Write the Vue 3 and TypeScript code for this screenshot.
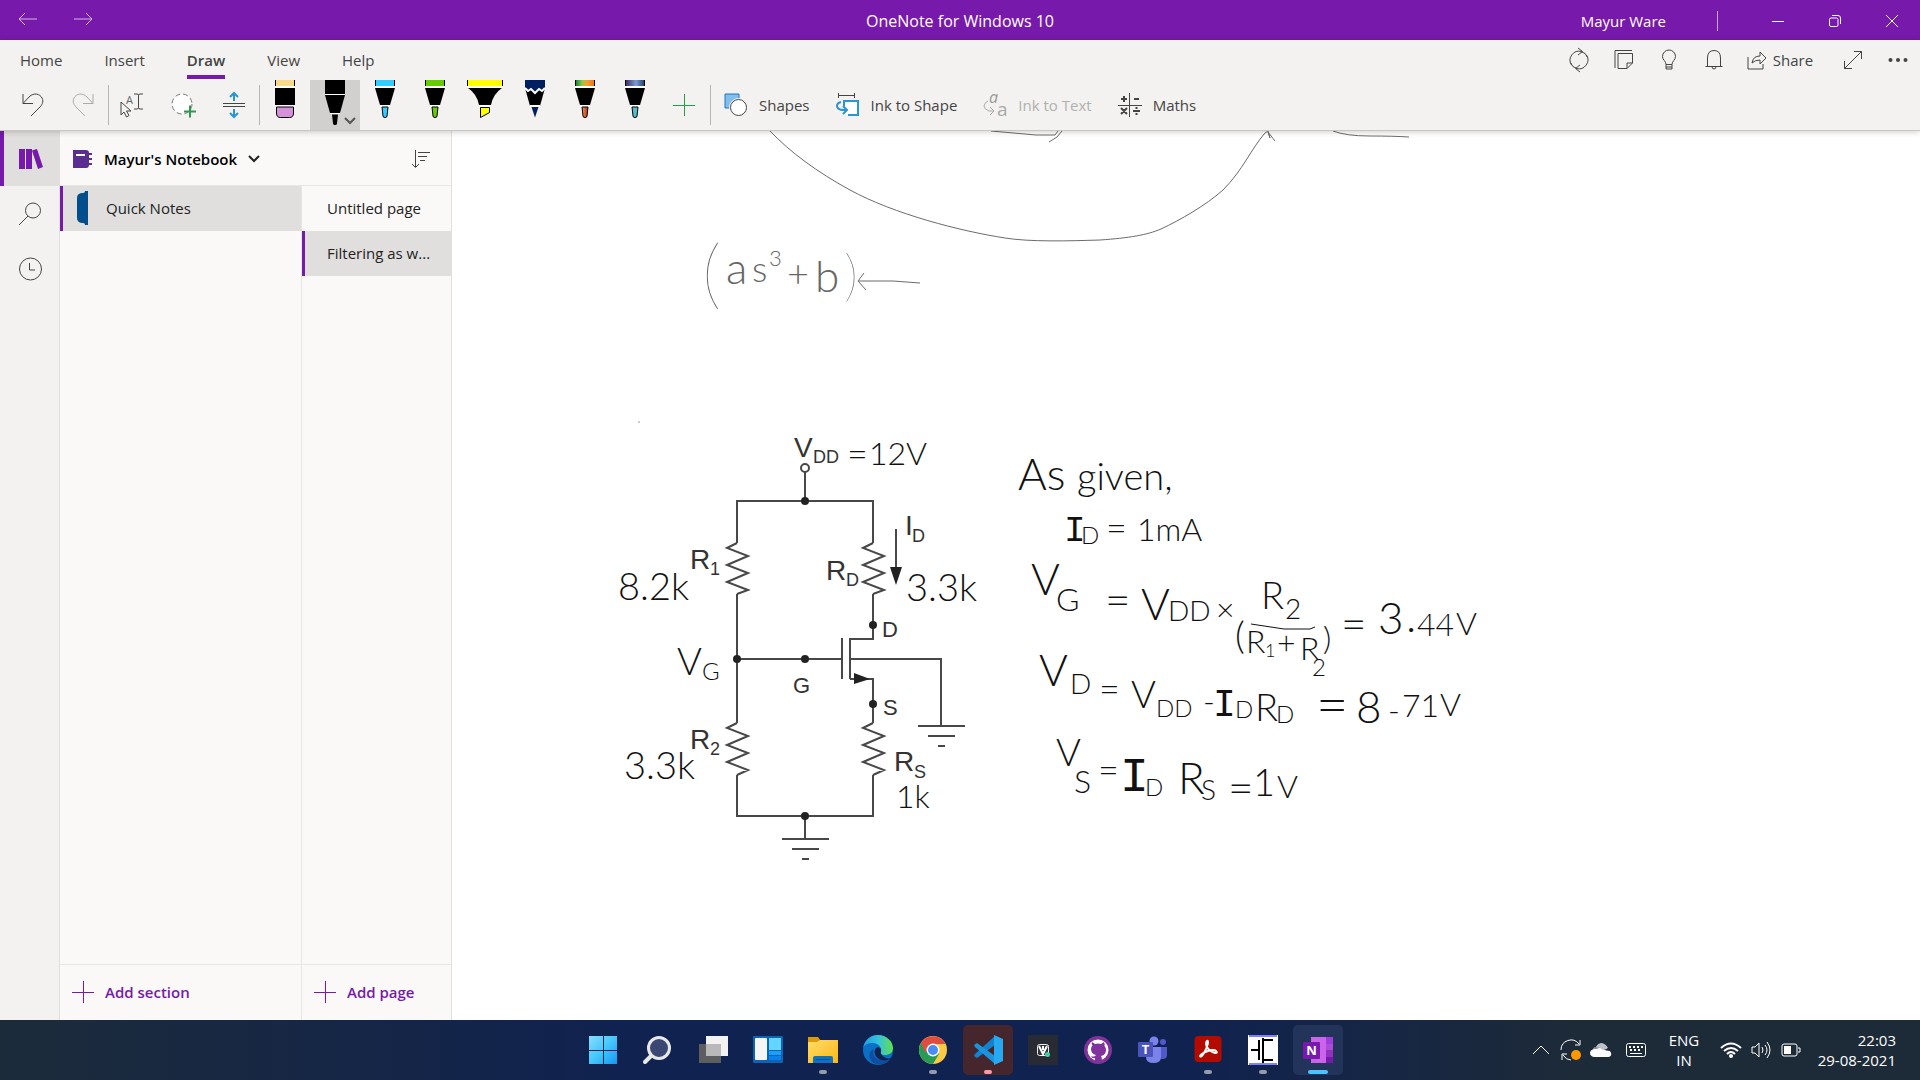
<script setup lang="ts">
interface Run { t: string; x: number; y: number; s: number; c?: string }
interface Pen { name: string; kind: string; cap: string; tip: string }

const tabs = ['Home', 'Insert', 'Draw', 'View', 'Help']

const pens: Pen[] = [
  { name: 'Eraser', kind: 'eraser', cap: '#f8d98b', tip: '#d493d9' },
  { name: 'Black pen', kind: 'active', cap: '#000', tip: '#000' },
  { name: 'Blue pen', kind: 'pen', cap: '#33ccff', tip: '#33ccff' },
  { name: 'Green pen', kind: 'pen', cap: '#66cc00', tip: '#66cc00' },
  { name: 'Yellow highlighter', kind: 'marker', cap: '#ffff00', tip: '#ffff00' },
  { name: 'Navy pencil', kind: 'pencil', cap: '#001f60', tip: '#001f60' },
  { name: 'Rainbow pen', kind: 'pen', cap: 'url(#rainbow)', tip: 'url(#lava)' },
  { name: 'Galaxy pen', kind: 'pen', cap: 'url(#galaxy)', tip: '#55bccb' },
]

const labels: Run[][] = [
  [{ t: 'V', x: 794, y: 457, s: 28 }, { t: 'DD', x: 813, y: 463, s: 18 }],
  [{ t: 'I', x: 905, y: 535, s: 28 }, { t: 'D', x: 912, y: 542, s: 18 }],
  [{ t: 'R', x: 690, y: 569, s: 28 }, { t: '1', x: 710, y: 575, s: 18 }],
  [{ t: 'R', x: 826, y: 580, s: 28 }, { t: 'D', x: 846, y: 586, s: 18 }],
  [{ t: 'D', x: 882, y: 637, s: 22 }],
  [{ t: 'G', x: 793, y: 693, s: 22 }],
  [{ t: 'S', x: 883, y: 715, s: 22 }],
  [{ t: 'R', x: 690, y: 749, s: 28 }, { t: '2', x: 710, y: 755, s: 18 }],
  [{ t: 'R', x: 894, y: 771, s: 28 }, { t: 'S', x: 914, y: 778, s: 18 }],
]

const notes: Run[][] = [
  [{ t: '=', x: 847, y: 467, s: 36 }, { t: '12V', x: 869, y: 465, s: 32 }],
  [{ t: '8.2k', x: 618, y: 600, s: 38 }],
  [{ t: '3.3k', x: 906, y: 601, s: 38 }],
  [{ t: 'V', x: 677, y: 675, s: 38 }, { t: 'G', x: 702, y: 680, s: 24 }],
  [{ t: '3.3k', x: 624, y: 779, s: 38 }],
  [{ t: '1k', x: 896, y: 808, s: 32 }],
  [{ t: 'As', x: 1018, y: 490, s: 44 }],
  [{ t: 'given,', x: 1077, y: 490, s: 38 }],
  [{ t: 'I', x: 1064, y: 541, s: 36, c: 'serifed' }, { t: 'D', x: 1081, y: 544, s: 24 }, { t: '=', x: 1106, y: 541, s: 36 }, { t: '1mA', x: 1137, y: 541, s: 32 }],
  [{ t: 'V', x: 1031, y: 595, s: 44 }, { t: 'G', x: 1056, y: 611, s: 32 }, { t: '=', x: 1105, y: 616, s: 44 }, { t: 'V', x: 1141, y: 620, s: 44 }, { t: 'DD', x: 1168, y: 621, s: 28 }, { t: '×', x: 1216, y: 621, s: 32 }, { t: 'R', x: 1261, y: 609, s: 38 }, { t: '2', x: 1285, y: 619, s: 28 }],
  [{ t: '(', x: 1235, y: 649, s: 38 }, { t: 'R', x: 1246, y: 653, s: 32 }, { t: '1', x: 1265, y: 657, s: 18 }, { t: '+', x: 1277, y: 654, s: 32 }, { t: 'R', x: 1300, y: 660, s: 32 }, { t: '2', x: 1312, y: 676, s: 24 }, { t: ')', x: 1323, y: 650, s: 32 }],
  [{ t: '=', x: 1341, y: 640, s: 44 }, { t: '3', x: 1378, y: 634, s: 44 }, { t: '.', x: 1406, y: 632, s: 44 }, { t: '44', x: 1417, y: 636, s: 32 }, { t: 'V', x: 1456, y: 635, s: 32 }],
  [{ t: 'V', x: 1039, y: 686, s: 44 }, { t: 'D', x: 1070, y: 694, s: 28 }, { t: '=', x: 1099, y: 702, s: 36 }, { t: 'V', x: 1131, y: 708, s: 38 }, { t: 'DD', x: 1156, y: 717, s: 24 }, { t: '-', x: 1203, y: 713, s: 32 }, { t: 'I', x: 1213, y: 716, s: 38, c: 'serifed' }, { t: 'D', x: 1235, y: 718, s: 24 }, { t: 'R', x: 1255, y: 721, s: 38 }, { t: 'D', x: 1276, y: 723, s: 24 }, { t: '8', x: 1356, y: 723, s: 44 }, { t: '-', x: 1388, y: 722, s: 32 }, { t: '71', x: 1402, y: 717, s: 32 }, { t: 'V', x: 1440, y: 716, s: 32 }],
  [{ t: '=', x: 1316, y: 724, s: 56 }],
  [{ t: 'V', x: 1056, y: 766, s: 38 }, { t: 'S', x: 1074, y: 793, s: 32 }, { t: '=', x: 1098, y: 783, s: 36 }, { t: 'I', x: 1120, y: 791, s: 48, c: 'serifed' }, { t: 'D', x: 1145, y: 796, s: 24 }, { t: 'R', x: 1178, y: 794, s: 44 }, { t: 'S', x: 1201, y: 800, s: 28 }, { t: '=', x: 1228, y: 804, s: 44 }, { t: '1', x: 1253, y: 796, s: 38 }, { t: 'V', x: 1277, y: 798, s: 32 }],
]

const formula: Run[] = [
  { t: '(', x: 702, y: 300, s: 76, c: 'hairline' },
  { t: 'a', x: 726, y: 284, s: 44 },
  { t: 's', x: 752, y: 282, s: 36 },
  { t: '3', x: 769, y: 266, s: 22 },
  { t: '+', x: 787, y: 287, s: 38 },
  { t: 'b', x: 815, y: 292, s: 44 },
  { t: ')', x: 844, y: 295, s: 56, c: 'hairline' },
]

const nodes = [[805, 501], [873, 625], [737, 659], [805, 659], [873, 704], [805, 816]]
const apps = ['Start', 'Search', 'Task view', 'Widgets', 'File Explorer', 'Edge', 'Chrome', 'Visual Studio Code', 'Voice', 'GitHub Desktop', 'Teams', 'Acrobat', 'LTspice', 'OneNote']
const running = ['File Explorer', 'Chrome', 'Visual Studio Code', 'Acrobat', 'LTspice', 'OneNote']
</script>

<template>
  <div class="window">
    <header class="titlebar">
      <nav class="history">
        <button aria-label="Back"><svg width="20" height="14" viewBox="0 0 20 14"><path d="M1 7h18M7 1L1 7l6 6" /></svg></button>
        <button aria-label="Forward"><svg width="20" height="14" viewBox="0 0 20 14"><path d="M1 7h18M13 1l6 6-6 6" /></svg></button>
      </nav>
      <h1>OneNote for Windows 10</h1>
      <div class="window-side">
        <span class="user">Mayur Ware</span>
        <span class="bar"></span>
        <button aria-label="Minimise"><svg width="14" height="14"><path d="M1 7.500h12" /></svg></button>
        <button aria-label="Restore"><svg width="14" height="14"><rect x="1.500" y="4" width="8.500" height="8.500" rx="1.500" /><path d="M4 1.500h6q2.500 0 2.500 2.500v6" /></svg></button>
        <button aria-label="Close"><svg width="14" height="14"><path d="M1 1l12 12M13 1L1 13" /></svg></button>
      </div>
    </header>

    <section class="ribbon">
      <div class="menu">
        <nav class="tabs">
          <button v-for="tab in tabs" :key="tab" :class="{ current: tab === 'Draw' }">{{ tab }}</button>
        </nav>
        <div class="actions">
          <button aria-label="Sync"><svg width="24" height="24" viewBox="0 0 24 24"><path d="M4.500 17A9 9 0 0 1 14.500 3.500M19.500 7A9 9 0 0 1 9.500 20.500M11 0l4.500 3.500L11 7M13 24l-4.500-3.500L13 17" /><path d="M14 3.500q5 1 6.500 6M10 20.500q-5-1-6.500-6" /></svg></button>
          <button aria-label="Feed"><svg width="22" height="22" viewBox="0 0 22 22"><path d="M5 4.500h14.500V14L14 19.500H5zM14 19.500V14h5.500M2 19V1.500h17" /></svg></button>
          <button aria-label="Tips"><svg width="20" height="22" viewBox="0 0 20 22"><path d="M7 15.500C7 12 3.500 11 3.500 7.500a6.500 6.500 0 0 1 13 0C16.500 11 13 12 13 15.500zM7 15.500V20h6v-4.500M7 18h6" /></svg></button>
          <button aria-label="Notifications"><svg width="20" height="22" viewBox="0 0 20 22"><path d="M1.500 17.500h17M3.500 17.500V9q0-7.500 6.500-7.500T16.500 9v8.500M8 17.500q0 2.500 2 2.500t2-2.500" /></svg></button>
          <button class="share"><svg width="20" height="22" viewBox="0 0 20 22"><path d="M1 8v12h15v-5M5 14q1-7 8-7V3l6 6-6 6v-4q-5 0-8 3z" /></svg>Share</button>
          <button aria-label="Full screen"><svg width="20" height="20" viewBox="0 0 20 20"><path d="M1.500 18.500l17-17M11 1.500h7.500V9M1.500 11v7.500H9" /></svg></button>
          <button aria-label="More"><svg width="20" height="8" viewBox="0 0 20 8" class="solid"><circle cx="2.500" cy="4" r="2" /><circle cx="10" cy="4" r="2" /><circle cx="17.500" cy="4" r="2" /></svg></button>
        </div>
      </div>

      <div class="tools">
        <button class="tool" aria-label="Undo"><svg width="24" height="26" viewBox="0 0 24 26"><path d="M2 2v9.500h10M2 11.500L8 5c5-5 11-3 13 1 2 4 0 7-3 10l-8 8" /></svg></button>
        <button class="tool faded" aria-label="Redo"><svg width="24" height="26" viewBox="0 0 24 26"><path d="M22 2v9.500H12M22 11.500L16 5C11 0 5 2 3 6c-2 4 0 7 3 10l8 8" /></svg></button>
        <span class="rule"></span>
        <button class="tool" aria-label="Select objects or type text">
          <svg width="28" height="26" viewBox="2 0 28 26"><path d="M3 10v13l3-3 2.500 5 2.500-1.500L8.500 19H13zM16 2h3q1.500 0 1.500 1.500Q20.500 2 22 2h3M20.500 3.500v12M16 17h3q1.500 0 1.500-1.500Q20.500 17 22 17h3" /><text x="8" y="12" class="mini">A</text></svg>
        </button>
        <button class="tool" aria-label="Lasso select">
          <svg width="26" height="26" viewBox="0 0 26 26"><circle cx="11" cy="12" r="10" fill="#fff" stroke="#777" stroke-dasharray="5 3" /><path d="M13 19.500h12M19 13.500v12" stroke="#2a9b4a" stroke-width="2" /></svg>
        </button>
        <button class="tool" aria-label="Insert space">
          <svg width="24" height="26" viewBox="0 0 24 26"><path d="M1 11.500h22M1 14.500h22" /><path d="M12 9V2M8 5l4-4 4 4M12 17v7M8 21l4 4 4-4" stroke="#2a94d8" stroke-width="2" /></svg>
        </button>
        <span class="rule"></span>
        <button v-for="pen in pens" :key="pen.name" class="tool pen" :class="{ active: pen.kind === 'active' }" :aria-label="pen.name">
          <svg width="50" height="50" viewBox="0 0 50 50">
            <defs>
              <linearGradient id="rainbow"><stop offset="0" stop-color="#177a39" /><stop offset=".35" stop-color="#8ccb4c" /><stop offset=".6" stop-color="#f5a02c" /><stop offset="1" stop-color="#e87322" /></linearGradient>
              <linearGradient id="lava"><stop offset="0" stop-color="#f29b45" /><stop offset="1" stop-color="#b52c21" /></linearGradient>
              <linearGradient id="galaxy"><stop offset="0" stop-color="#3d2860" /><stop offset=".55" stop-color="#7b9fd3" /><stop offset="1" stop-color="#253b6c" /></linearGradient>
            </defs>
            <template v-if="pen.kind === 'eraser'">
              <path d="M15 0h20v38H15z" fill="#fff" /><path d="M15.500 0h19v6h-19z" :fill="pen.cap" /><path d="M15.500 0v6M34.500 0v6" stroke="#000" /><path d="M15 8h20v17H15z" fill="#000" /><path d="M13 25h24v14H13z" fill="#f3f2f1" /><path d="M15 25.500h20v1.500H15z" fill="#fff" /><path d="M16.500 27h17v6q0 4.500-4 4.500h-9q-4 0-4-4.500z" :fill="pen.tip" stroke="#000" />
            </template>
            <template v-else-if="pen.kind === 'active'">
              <path d="M15 0h20v15l-5 18H20l-5-18z" fill="#000" /><path d="M15 14.500h20" stroke="#fff" /><path d="M20 33.500h10" stroke="#fff" /><path d="M22 34.500h6l-1 9q0 1.500-2 1.500t-2-1.500z" fill="#000" /><path d="M35 38l5 5 5-5" stroke="#555" stroke-width="2" fill="none" />
            </template>
            <template v-else-if="pen.kind === 'marker'">
              <path d="M7.500 0h35v6h-35z" :fill="pen.cap" /><path d="M7.500 0v6M42.500 0v6" stroke="#000" /><path d="M7 7h36M19 26h12" stroke="#fff" stroke-width="2" /><path d="M8 8h34Q33 14 31 25H19Q17 14 8 8z" fill="#000" /><path d="M20.500 27.500h9v5l-9 5z" :fill="pen.tip" stroke="#000" />
            </template>
            <template v-else-if="pen.kind === 'pencil'">
              <path d="M15 0h20v8l-5 18H20L15 8z" fill="#000" /><path d="M15 0h20v8l-3 3-3-2-4 4-4-4-3 2-3-3z" :fill="pen.cap" /><path d="M15 8l3 3 3-2 4 4 4-4 3 2 3-3M20 26h10" stroke="#fff" stroke-width="2" fill="none" /><path d="M21.500 27h7L25 37.500z" :fill="pen.tip" />
            </template>
            <template v-else>
              <path d="M15.500 0h19v6h-19z" :fill="pen.cap" /><path d="M15.500 0v6M34.500 0v6" stroke="#000" /><path d="M15 7h20M20 26h10" stroke="#fff" stroke-width="2" /><path d="M15 8h20l-5 17H20z" fill="#000" /><path d="M22 27h6l-1 9q0 1.500-2 1.500t-2-1.500z" :fill="pen.tip" stroke="#000" />
            </template>
          </svg>
        </button>
        <button class="tool" aria-label="Add pen"><svg width="24" height="24" viewBox="0 0 24 24"><path d="M0 12.500h22M11.500 1v22" stroke="#2a9b4a" /></svg></button>
        <span class="rule"></span>
        <button class="wide"><svg width="24" height="26" viewBox="0 0 24 26"><path d="M1 2h14v14H1z" fill="#83bdec" stroke="#1b78c2" /><circle cx="14.500" cy="15.500" r="9" fill="#f3f2f1" stroke="#f3f2f1" /><circle cx="14.500" cy="15.500" r="8" fill="#fff" /></svg>Shapes</button>
        <button class="wide"><svg width="24" height="26" viewBox="0 0 24 26"><path d="M2 3.500h17M2.500 1v5M18.500 1v5" /><path d="M8 9h14v14H12M8 9v5" stroke="#2a94d8" fill="#fff" stroke-width="2" /><path d="M8 9v14h14V9z" fill="#fff" stroke="none" /><path d="M8 14V9h14v14H12M5 10q-4 1-4 4t5 4h5M7 14l4 4-4 4" stroke="#2a94d8" stroke-width="2" /></svg>Ink to Shape</button>
        <button class="wide faded" disabled><svg width="24" height="26" viewBox="0 0 24 26"><text x="6" y="11" class="small-a">a</text><text x="14" y="24" class="big-a">a</text><path d="M5 9q-4 2-4 5t5 5h5M7 15l4 4-4 4" /></svg>Ink to Text</button>
        <button class="wide"><svg width="24" height="26" viewBox="0 0 24 26"><path d="M0 13.500h24M11.500 1v24" /><path d="M3 7h6M6 4v6M16 7h5M3 16l6 6M9 16l-6 6M15 19h7M18.500 15v2M18.500 21v2" stroke-width="2" /></svg>Maths</button>
      </div>
    </section>

    <div class="workspace">
      <nav class="rail">
        <button class="chosen" aria-label="Notebooks"><svg width="24" height="22" viewBox="0 0 24 22" fill="#7719aa"><path d="M0 1h6v20H0zM7 1h6v20H7zM13 2.500L18 1l6 18-5 2z" /></svg></button>
        <button aria-label="Search"><svg width="24" height="24" viewBox="0 0 24 24"><circle cx="15" cy="8.500" r="7.500" /><path d="M10 14L1 23" /></svg></button>
        <button aria-label="Recent"><svg width="24" height="24" viewBox="0 0 24 24"><circle cx="12.500" cy="12" r="11" /><path d="M11.500 6v7H17" /></svg></button>
      </nav>
      <aside class="panel">
        <div class="notebook">
          <button class="book">
            <svg width="20" height="20" viewBox="0 0 20 20"><path d="M0 1h13q3 0 3 3v12q0 3-3 3H0z" fill="#5c2d91" /><path d="M3 6h9" stroke="#fff" stroke-width="2" /><path d="M16 5h3M16 10h3M16 15h3" stroke="#5c2d91" stroke-width="2" /></svg>
            <span>Mayur's Notebook</span>
            <svg width="12" height="8" viewBox="0 0 12 8"><path d="M1 1l5 5 5-5" stroke="#222" stroke-width="2" /></svg>
          </button>
          <button aria-label="Sort pages"><svg width="20" height="20" viewBox="0 0 20 20"><path d="M4.500 1v17M1 15l3.500 3.500L8 15M7 3.500h12M7 7.500h9M9 11.500h5" /></svg></button>
        </div>
        <div class="lists">
          <div class="sections">
            <button class="item chosen"><svg width="11" height="34" viewBox="0 0 11 34"><path d="M11 0v34H8q0-2-2-2Q0 32 0 27V7q0-5 6-5 2 0 2-2z" fill="#004e8c" /></svg>Quick Notes</button>
            <button class="add"><svg width="22" height="22"><path d="M0 11.500h22M11.500 0v22" stroke="#7719aa" /></svg>Add section</button>
          </div>
          <div class="pages">
            <button class="item">Untitled page</button>
            <button class="item chosen">Filtering as w...</button>
            <button class="add"><svg width="22" height="22"><path d="M0 11.500h22M11.500 0v22" stroke="#7719aa" /></svg>Add page</button>
          </div>
        </div>
      </aside>

      <main class="canvas">
        <svg class="ink" width="1468" height="889" viewBox="452 131 1468 889">
          <g class="old">
            <path d="M770 131C790 152 817 172 850 190C894 214 960 231 1005 238C1030 242 1068 241 1100 240C1129 238 1147 235 1161 229C1180 220 1205 206 1223 190C1243 170 1251 149 1265 133L1268 131L1270 138L1268 132L1275 141" />
            <path d="M991 131L1036 135H1055L1058 131M1062 131L1057 137L1049 142M1333 131Q1346 136 1370 136T1409 137" />
            <path d="M864 273L858 281L866 290M859 281H893L920 283" />
          </g>
          <text class="hand old-text"><tspan v-for="(r, i) in formula" :key="i" :class="r.c" :x="r.x" :y="r.y" :font-size="r.s">{{ r.t }}</tspan></text>
          <g class="circuit">
            <circle cx="805" cy="468" r="4" />
            <path d="M805 472V501M737 543V501H873V543M737 594V723M737 775V816H873V775M873 594V639H850M850 638V679M842 638V679M737 659H842M850 659H941V726M850 679H873V723M805 816V839M782 839H829M792 849H819M802 859H809M918 726H965M928 736H955M938 746H945M896 529V570" />
            <path d="M737 543L727 548L748 556L727 565L748 573L727 582L748 590L737 594M873 543L863 548L884 556L863 565L884 573L863 582L884 590L873 594M737 723L727 728L748 736L727 745L748 753L727 762L748 770L737 775M873 723L863 728L884 736L863 745L884 753L863 762L884 770L873 775" />
            <path class="fill" d="M890 567h12l-6 18zM854 673l16 6-16 5z" />
            <circle v-for="(n, i) in nodes" :key="i" class="fill" :cx="n[0]" :cy="n[1]" r="4" />
          </g>
          <text v-for="(line, i) in labels" :key="'l' + i" class="label"><tspan v-for="(r, j) in line" :key="j" :x="r.x" :y="r.y" :font-size="r.s">{{ r.t }}</tspan></text>
          <text v-for="(line, i) in notes" :key="'n' + i" class="hand"><tspan v-for="(r, j) in line" :key="j" :class="r.c" :x="r.x" :y="r.y" :font-size="r.s">{{ r.t }}</tspan></text>
          <path class="stroke" d="M1251 624L1284 629H1310L1315 627" />
          <circle cx="639" cy="422" r="1" fill="#bbb" />
        </svg>
      </main>
    </div>

    <footer class="taskbar">
      <div class="apps">
        <button v-for="app in apps" :key="app" class="app" :class="{ running: running.includes(app), front: app === 'OneNote', alert: app === 'Visual Studio Code' }" :aria-label="app">
          <svg width="30" height="30" viewBox="0 0 30 30">
            <defs>
              <linearGradient id="win" x2="1" y2="1"><stop offset="0" stop-color="#86defd" /><stop offset=".5" stop-color="#46c6fb" /><stop offset="1" stop-color="#1496f5" /></linearGradient>
              <linearGradient id="folder" x2="1" y2="1"><stop offset="0" stop-color="#ffdc6b" /><stop offset="1" stop-color="#fbb812" /></linearGradient>
              <linearGradient id="edge" x2="1"><stop offset="0" stop-color="#1e9de0" /><stop offset=".5" stop-color="#35c1e0" /><stop offset="1" stop-color="#5fe04a" /></linearGradient>
            </defs>
            <g v-if="app === 'Start'" fill="url(#win)"><path d="M1 1h14v14H1zM16 1h13v14H16zM1 16h14v13H1zM16 16h13v13H16z" /></g>
            <g v-else-if="app === 'Search'" fill="#3b4873" stroke="#e8e8e8"><path d="M10 19l-8 8" stroke-width="4" stroke-linecap="round" /><circle cx="16" cy="13" r="10.500" stroke-width="3" /></g>
            <g v-else-if="app === 'Task view'"><path d="M8 1h22v20H8z" fill="#f2f2f2" /><path d="M1 9h22v19H1z" fill="#5e5e5e" /><path d="M8 9h15v12H8z" fill="#b9b9b9" /></g>
            <g v-else-if="app === 'Widgets'"><rect y="1" width="30" height="27" rx="1" fill="#0d64b5" /><rect x="2" y="3" width="12" height="22" rx="1" fill="#f5f5f5" /><path d="M16 3h12v12H16z" fill="#63d5ff" /><path d="M16 16h12v4H16z" fill="#19a0fa" /><path d="M16 21h12v4H16z" fill="#0b80ea" /></g>
            <g v-else-if="app === 'File Explorer'"><path d="M0 2h10l3 4v6H0z" fill="#dc9a08" /><path d="M0 7h9l3-2h18v23H0z" fill="url(#folder)" /><path d="M5 28v-5q0-2 2-2h16q2 0 2 2v5z" fill="#0f72c0" /><path d="M8 24.500h14" stroke="#0a4f90" /></g>
            <g v-else-if="app === 'Edge'"><circle cx="15" cy="15" r="15" fill="#0b6fc6" /><path d="M0 13C2 4 8 0 15 0c8 0 15 6 15 13 0 5-4 7-8 7-3 0-5-1-4-3 1-5-3-9-8-9-5 0-9 2-10 5z" fill="url(#edge)" /><path d="M11 14c-3 7 3 14 16 10-4 7-16 8-20 0-2-5 1-9 4-10z" fill="#0c4fa0" /><path d="M13 13c-3 4-1 10 5 12 4 1 8 0 10-2-3 1-6 0-8-2-2-2-3-3-2-5 1-3-3-5-5-3z" fill="#10224f" /></g>
            <g v-else-if="app === 'Chrome'"><circle cx="15" cy="15" r="14" fill="#fbc943" /><path d="M15 15L2.900 8A14 14 0 0 0 15 29l6-10z" fill="#259b55" /><path d="M15 15l-8 2L2.900 8A14 14 0 0 1 27.500 9H15z" fill="#de4d40" /><circle cx="15" cy="15" r="6.500" fill="#fff" /><circle cx="15" cy="15" r="5" fill="#4b8bf5" /></g>
            <g v-else-if="app === 'Visual Studio Code'"><path d="M2 19L22 1v9L4 23l-3-2z" fill="#1183cf" /><path d="M1 10l3-2 18 13v8L2 12z" fill="#1994dd" /><path d="M21 0l9 4v22l-9 4z" fill="#27a9f1" /></g>
            <g v-else-if="app === 'Voice'"><path d="M0 0h30v30H0z" fill="#282b34" /><rect x="9.500" y="9.500" width="11" height="11" rx="2" fill="#30343c" stroke="#eee" /><path d="M11 11l4 8 4-8M15 11v4" stroke="#fff" stroke-width="2" fill="none" /><circle cx="19.500" cy="19.500" r="2.500" fill="#3bd3a4" /></g>
            <g v-else-if="app === 'GitHub Desktop'"><circle cx="15" cy="15" r="14" fill="#81339c" /><circle cx="15" cy="15" r="10.500" fill="#fff" /><path d="M9 7l3 2q3-1 6 0l3-2q1 2 .5 4 1.500 1.500 1.500 4 0 5-5 6 1 1 1 5h-7v-3q-3 1-4-2 2 1 4 0l1-1q-5-1-5-6 0-2.500 1.500-3.500Q8 9 9 7z" fill="#81339c" /></g>
            <g v-else-if="app === 'Teams'"><circle cx="16" cy="6" r="4.500" fill="#7b83eb" /><circle cx="25" cy="7" r="3" fill="#5059c9" /><path d="M20 12h9v8q0 4-4 4h-5z" fill="#5059c9" /><path d="M8 12h15v10q0 6-7.500 6T8 22z" fill="#7b83eb" /><rect y="7" width="15" height="15" rx="1" fill="#4b53bc" /><text x="7.500" y="19" class="logo">T</text></g>
            <g v-else-if="app === 'Acrobat'"><rect x="1.500" y="1" width="27" height="26" rx="4" fill="#b30b00" /><path d="M14 6q-2 2 0 6t8 6q3 0 1-2t-8 0-8 5q1 2 4-3t4-10q0-3-1-2z" stroke="#fff" stroke-width="2" fill="none" /></g>
            <g v-else-if="app === 'LTspice'"><path d="M0 0h30v30H0z" fill="#fff" /><path d="M1 1h28M1 29h28" stroke="#00f" /><path d="M3 15h8M11 5v20M15 3v25M16 5h9M16 25h9" stroke="#000" stroke-width="2" /></g>
            <g v-else><path d="M8 2h15v26H8z" fill="#ca64ea" /><path d="M23 2h7v7h-7z" fill="#a03cdb" /><path d="M23 9h7v6h-7z" fill="#ae4bd5" /><path d="M23 15h7v7h-7z" fill="#9332bf" /><path d="M23 22h7v6h-7z" fill="#7719aa" /><rect y="7" width="17" height="17" rx="1" fill="#7719aa" /><text x="8.500" y="20" class="logo">N</text></g>
          </svg>
        </button>
      </div>
      <div class="tray">
        <button aria-label="Hidden icons"><svg width="18" height="10" viewBox="0 0 18 10"><path d="M1 9l8-8 8 8" /></svg></button>
        <button aria-label="Update"><svg width="22" height="22" viewBox="0 0 22 22"><path d="M1 11A10 10 0 0 1 19 5M20 1v5h-5M2 21v-6h5M3 16q3 5 8 5" /><circle cx="16" cy="16" r="5" fill="#ff9800" stroke="none" /></svg></button>
        <button aria-label="OneDrive"><svg width="22" height="14" viewBox="0 0 22 14" class="flat"><path d="M3 9Q2 4 6 4q3-5 8-2 3 2 3 4z" fill="#8c939b" /><path d="M4 14q-4-1-4-4t4-4h3q3-2 6 0t7 2q3 4-1 6z" fill="#fff" /><path d="M6 4q4 0 7 3l5-2q-2-4-6-5-4 0-6 4z" fill="#bcc1c6" /></svg></button>
        <button class="keys" aria-label="Touch keyboard"><svg width="20" height="14" viewBox="0 0 20 14"><rect x=".5" y=".5" width="19" height="13" rx="2" /><path d="M3 4h14M4 7h12" stroke-dasharray="2 2" stroke-width="2" /><path d="M4 10.500h12" /></svg></button>
        <button class="language">ENG<br>IN</button>
        <button aria-label="Network"><svg width="22" height="16" viewBox="0 0 22 16"><path d="M1 6q10-9 20 0M4 9q7-6 14 0M7 12q4-4 8 0" stroke-width="2" /><circle cx="11" cy="14" r="2" fill="#fff" stroke="none" /></svg></button>
        <button aria-label="Volume"><svg width="20" height="18" viewBox="0 0 20 18"><path d="M1 6h3l4-4v14l-4-4H1zM11 6q2 3 0 6M14 4q4 5 0 10M16 1q6 8 0 16" /></svg></button>
        <button aria-label="Battery"><svg width="20" height="14" viewBox="0 0 20 14"><rect x="1" y="1" width="15" height="12" rx="2" /><path d="M3 3h7v8H3z" fill="#fff" stroke="none" /><path d="M17 5h2v4h-2" /></svg></button>
        <button class="clock">22:03<br>29-08-2021</button>
      </div>
    </footer>
  </div>
</template>

<style>
body { margin: 0; overflow: hidden; }
</style>

<style scoped>
* { box-sizing: border-box; }
.window { display: flex; flex-direction: column; height: 100vh; font: 15px/20px "Open Sans", "Noto Sans", sans-serif; color: #444; background: #fff; }
button { display: flex; align-items: center; justify-content: center; padding: 0; border: 0; background: none; color: inherit; font: inherit; white-space: nowrap; }
svg { display: block; flex: none; fill: none; stroke: none; overflow: visible; }
.titlebar { display: grid; grid-template-columns: 1fr auto 1fr; align-items: stretch; height: 40px; background: #7719aa; color: #fff; }
.titlebar svg { stroke: #fff; }
.titlebar h1 { margin: 0; font: inherit; font-size: 16px; line-height: 42px; }
.history { display: flex; opacity: .7; }
.history button { width: 55px; height: 38px; }
.window-side { display: flex; justify-content: flex-end; align-items: center; line-height: 42px; }
.window-side button { width: 57px; height: 38px; }
.bar { width: 1px; height: 20px; margin: 0 31px 0 51px; background: #c9a3dd; }
.ribbon { position: relative; z-index: 1; background: #f3f2f1; border-bottom: 1px solid #c8c6c4; box-shadow: 0 1px 6px rgba(0, 0, 0, .2); }
.menu { display: flex; justify-content: space-between; height: 40px; }
.tabs { display: flex; gap: 42px; padding-left: 20px; }
.tabs button { height: 39px; padding-top: 4px; border-bottom: 4px solid transparent; }
.tabs .current { font-weight: 600; border-color: #7719aa; }
.actions { display: flex; }
.actions button { width: 45px; height: 40px; }
.actions .share { width: 94px; gap: 6px; padding-right: 6px; }
.actions svg, .tools svg, .rail svg, .panel svg { stroke: #444; }
.actions .solid { fill: #444; stroke: none; }
.tools { display: flex; height: 50px; padding-left: 8px; }
.tool { width: 50px; }
.tools .pen svg { stroke: none; }
.active { background: #d2d0ce; }
.rule { width: 1px; height: 40px; margin-top: 5px; background: #b8b6b4; }
.wide { gap: 11px; padding: 0 13px; }
.faded { color: #b1b0af; }
.tools .faded svg { stroke: #aaa; }
.mini, .small-a, .big-a { fill: #666; stroke: none; font-size: 11px; }
.small-a { fill: #999; font-size: 16px; font-style: italic; }
.big-a { fill: #aaa; font-size: 19px; }
.workspace { display: flex; flex: 1; min-height: 0; }
.rail { width: 60px; background: #f3f2f1; border-right: 1px solid #e1dfdd; }
.rail button { width: 60px; height: 55px; }
.rail .chosen { padding-right: 2px; border-left: 4px solid #7719aa; background: #e1dfdd; }
.rail .chosen svg { stroke: none; fill: #7719aa; }
.panel { display: flex; flex-direction: column; width: 392px; background: #faf9f8; border-right: 1px solid #e1dfdd; color: #222; }
.notebook { display: flex; justify-content: space-between; height: 55px; padding: 1px 20px 0 13px; border-bottom: 1px solid #e8e6e4; }
.book { gap: 11px; font-weight: 600; color: #000; }
.book svg { stroke: none; }
.lists { display: flex; flex: 1; }
.sections, .pages { display: flex; flex-direction: column; }
.sections { width: 242px; border-right: 1px solid #e8e6e4; }
.pages { flex: 1; }
.item { justify-content: flex-start; gap: 18px; height: 45px; padding: 0 0 1px 22px; border-left: 3px solid transparent; }
.sections .item { padding-left: 14px; }
.item svg { stroke: none; }
.lists .chosen { border-color: #7719aa; background: #e1dfdd; }
.add { justify-content: flex-start; gap: 11px; height: 56px; margin-top: auto; padding: 0 0 2px 12px; border-top: 1px solid #e8e6e4; color: #7719aa; font-weight: 600; }
.canvas { flex: 1; min-width: 0; overflow: hidden; background: #fff; }
.old { stroke: #6b6b6b; }
.hand { fill: #111; font-family: Lato, sans-serif; font-weight: 300; }
.serifed { font-family: "Liberation Mono", monospace; }
.hairline { font-weight: 100; }
.old-text { fill: #666; }
.label { fill: #333; font-family: "Liberation Sans", Arial, sans-serif; }
.circuit { stroke: #484848; stroke-width: 2; }
.fill { fill: #222; stroke: none; }
.stroke { stroke: #111; }
.taskbar { display: grid; grid-template-columns: 1fr auto 1fr; align-items: center; height: 60px; background: linear-gradient(90deg, #1c2b3a, #10224f 32%, #10224f 62%, #1d2a38 82%); color: #fff; }
.apps { display: flex; gap: 5px; grid-column: 2; }
.app { position: relative; width: 50px; height: 50px; border-radius: 5px; }
.running::after { content: ""; position: absolute; bottom: 1px; left: 21px; width: 8px; height: 4px; border-radius: 2px; background: #959bad; }
.front { background: #23345b; }
.front::after { left: 15px; width: 20px; background: #4cc2ff; }
.alert { background: #45262c; }
.alert::after { background: #ff99a4; }
.logo { fill: #fff; font-size: 13px; font-weight: 700; text-anchor: middle; }
.tray { display: flex; align-items: center; justify-content: flex-end; padding-right: 24px; }
.tray svg { stroke: #fff; }
.tray .flat { stroke: none; }
.tray button { width: 30px; height: 50px; }
.tray .keys { width: 40px; }
.tray .language { width: 60px; padding-right: 4px; }
.tray .clock { width: 90px; justify-content: flex-end; text-align: right; }
</style>
